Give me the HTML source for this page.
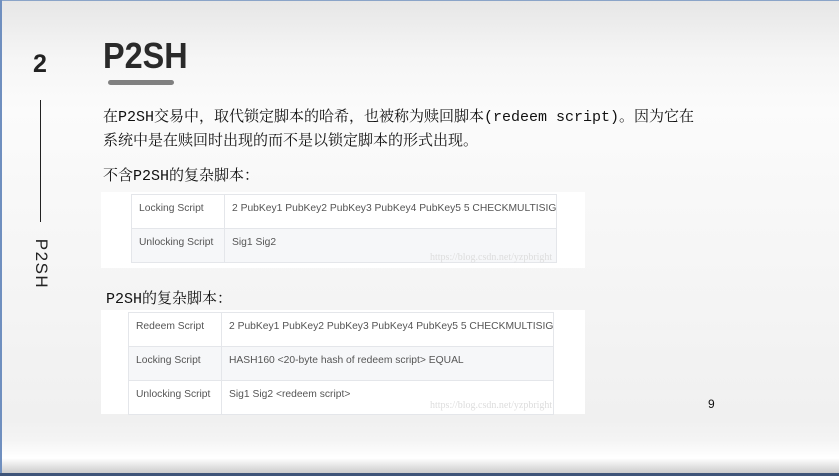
<!DOCTYPE html>
<html><head><meta charset="utf-8"><style>
*{margin:0;padding:0;box-sizing:border-box}
body{width:839px;height:476px;overflow:hidden;position:relative;font-family:"Liberation Sans","Noto Sans CJK SC",sans-serif;
background:linear-gradient(#e6e6e6 0px,#f6f6f6 60px,#fbfbfb 110px,#f6f6f6 250px,#f0f0f0 420px,#f4f4f4 440px,#ffffff 458px,#f2f2f2 462px,#c8c8c8 474px);}
.topb{position:absolute;left:0;top:0;width:839px;height:1px;background:#8aa4c8}
.leftb{position:absolute;left:0;top:0;width:2px;height:476px;background:#6f8fbf}
.botb{position:absolute;left:0;top:473px;width:839px;height:3px;background:#3e5478}
.num{position:absolute;left:33px;top:50px;font-weight:bold;font-size:25px;color:#222}
.vline{position:absolute;left:40px;top:100px;width:1px;height:122px;background:#222}
.vtext{position:absolute;left:6px;top:254px;font-size:17px;color:#222;transform:rotate(90deg);width:70px;text-align:center;letter-spacing:1.5px}
.title{position:absolute;left:103px;top:35px;font-weight:bold;font-size:36px;color:#2a2a2a;transform:scaleX(0.9);transform-origin:left}
.bar{position:absolute;left:108px;top:80px;width:66px;height:5px;border-radius:3px;background:#808080}
.cn{position:absolute;font-family:"Liberation Mono","Noto Serif CJK SC",serif;font-size:15px;color:#111;white-space:nowrap}
.box{position:absolute;left:101px;width:484px;background:#fff}
table{position:absolute;border-collapse:collapse;table-layout:fixed;font-size:10.3px;color:#555;white-space:nowrap}
td{border:1px solid #e4e6ea;height:34px;vertical-align:top;padding:8px 0 0 7px;overflow:hidden}
tr.g td{background:#f6f7f9}
.wm{position:absolute;font-family:"Liberation Serif",serif;font-size:10px;color:#ddd}
.pg{position:absolute;left:708px;top:397px;font-size:12px;color:#111}
</style></head><body>
<div class="topb"></div><div class="leftb"></div><div class="botb"></div>
<div class="num">2</div>
<div class="vline"></div>
<div class="vtext">P2SH</div>
<div class="title">P2SH</div>
<div class="bar"></div>
<div class="cn" style="left:103px;top:105px">在P2SH交易中，取代锁定脚本的哈希，也被称为赎回脚本(redeem script)。因为它在</div>
<div class="cn" style="left:103px;top:129px">系统中是在赎回时出现的而不是以锁定脚本的形式出现。</div>
<div class="cn" style="left:103px;top:164px">不含P2SH的复杂脚本：</div>
<div class="box" style="top:192px;height:76px"></div>
<table style="left:131px;top:194px;width:426px">
<tr><td style="width:93px">Locking Script</td><td>2 PubKey1 PubKey2 PubKey3 PubKey4 PubKey5 5 CHECKMULTISIG</td></tr>
<tr class="g"><td>Unlocking Script</td><td>Sig1 Sig2</td></tr>
</table>
<div class="wm" style="left:430px;top:252px">https://blog.csdn.net/yzpbright</div>
<div class="cn" style="left:106px;top:287px">P2SH的复杂脚本：</div>
<div class="box" style="top:310px;height:104px"></div>
<table style="left:128px;top:312px;width:426px">
<tr><td style="width:93px">Redeem Script</td><td>2 PubKey1 PubKey2 PubKey3 PubKey4 PubKey5 5 CHECKMULTISIG</td></tr>
<tr class="g"><td>Locking Script</td><td>HASH160 &lt;20-byte hash of redeem script&gt; EQUAL</td></tr>
<tr><td>Unlocking Script</td><td>Sig1 Sig2 &lt;redeem script&gt;</td></tr>
</table>
<div class="wm" style="left:430px;top:400px">https://blog.csdn.net/yzpbright</div>
<div class="pg">9</div>
</body></html>
